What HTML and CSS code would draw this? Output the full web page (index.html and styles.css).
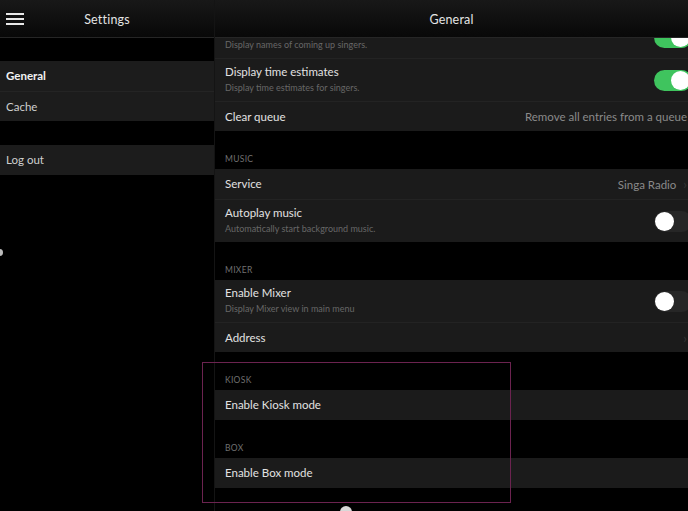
FILE: index.html
```html
<!DOCTYPE html>
<html lang="en">
<head>
    <meta charset="UTF-8">
    <meta name="viewport" content="width=device-width, initial-scale=1.0">
    <title>Settings - General</title>
    <link rel="stylesheet" href="styles.css">
</head>
<body>

    <div class="app">
        <div class="sidebar">
            <div class="topbar">
                <div class="menu-icon"><span></span><span></span><span></span></div>
                <h1>Settings</h1>
            </div>
            <div class="side-group">
                <div class="side-row active">General</div>
                <div class="side-row">Cache</div>
            </div>
            <div class="side-group">
                <div class="side-row">Log out</div>
            </div>
        </div>

        <div class="main">
            <div class="topbar">
                <h1>General</h1>
            </div>
            <div class="content">
                <div class="group first">
                    <div class="row tall">
                        <div class="text">
                            <div class="title">Show coming up singers</div>
                            <div class="sub">Display names of coming up singers.</div>
                        </div>
                        <div class="toggle on"></div>
                    </div>
                    <div class="row tall">
                        <div class="text">
                            <div class="title">Display time estimates</div>
                            <div class="sub">Display time estimates for singers.</div>
                        </div>
                        <div class="toggle on"></div>
                    </div>
                    <div class="row">
                        <div class="title">Clear queue</div>
                        <div class="value">Remove all entries from a queue</div>
                    </div>
                </div>

                <div class="section-label">MUSIC</div>
                <div class="group">
                    <div class="row">
                        <div class="title">Service</div>
                        <div class="value">Singa Radio <span class="chevron">&#8250;</span></div>
                    </div>
                    <div class="row tall">
                        <div class="text">
                            <div class="title">Autoplay music</div>
                            <div class="sub">Automatically start background music.</div>
                        </div>
                        <div class="toggle"></div>
                    </div>
                </div>

                <div class="section-label">MIXER</div>
                <div class="group">
                    <div class="row tall">
                        <div class="text">
                            <div class="title">Enable Mixer</div>
                            <div class="sub">Display Mixer view in main menu</div>
                        </div>
                        <div class="toggle"></div>
                    </div>
                    <div class="row">
                        <div class="title">Address</div>
                        <div class="value"><span class="chevron">&#8250;</span></div>
                    </div>
                </div>

                <div class="section-label">KIOSK</div>
                <div class="group">
                    <div class="row">
                        <div class="title">Enable Kiosk mode</div>
                    </div>
                </div>

                <div class="section-label">BOX</div>
                <div class="group">
                    <div class="row">
                        <div class="title">Enable Box mode</div>
                    </div>
                </div>
            </div>
        </div>
    </div>

    <!-- highlight drawn over the screenshot -->
    <div class="highlight"></div>
    <div class="scroll-dot"></div>
    <div class="edge-dot"></div>

</body>
</html>
```

FILE: styles.css
```css
html, body {
    margin: 0;
    padding: 0;
    height: 100%;
    overflow: hidden;
}
body {
    font-family: Lato, "Open Sans", sans-serif;
    background-color: #000;
    color: #e8e8e8;
    position: relative;
}
.app {
    display: flex;
    height: 511px;
}
.sidebar {
    width: 214px;
    flex-shrink: 0;
    border-right: 1px solid #141414;
}
.main {
    flex: 1;
    display: flex;
    flex-direction: column;
    overflow: hidden;
}
.topbar {
    height: 38px;
    padding-top: 2px;
    box-sizing: border-box;
    border-bottom: 1px solid #262626;
    background: linear-gradient(#181818, #080808);
    display: flex;
    align-items: center;
    justify-content: center;
    position: relative;
    z-index: 2;
    flex-shrink: 0;
}
.topbar h1 {
    margin: 0;
    font-size: 12.5px;
    font-weight: 400;
    color: #e4e4e4;
    letter-spacing: 0.2px;
}
.menu-icon {
    position: absolute;
    left: 6px;
    top: 13px;
    width: 18px;
    display: flex;
    flex-direction: column;
    gap: 3px;
}
.menu-icon span {
    display: block;
    height: 2px;
    background-color: #e8e8e8;
}
.side-group {
    margin-top: 23px;
}
.side-group + .side-group {
    margin-top: 24px;
}
.side-row {
    height: 30px;
    line-height: 29px;
    padding-left: 6px;
    background-color: #1c1c1c;
    font-size: 11.5px;
    color: #cfcfcf;
}
.side-row + .side-row {
    border-top: 1px solid #242424;
    height: 29px;
}
.side-row.active {
    font-weight: 700;
    color: #f2f2f2;
}

.content {
    flex: 1;
}
.group.first {
    margin-top: -22px;
}
.row {
    height: 30px;
    padding-left: 10px;
    background-color: #1b1b1b;
    display: flex;
    align-items: center;
    justify-content: space-between;
}
.row + .row {
    border-top: 1px solid #232323;
    height: 29px;
}
.row.tall {
    height: 42px;
}
.row + .row.tall {
    height: 42px;
}
.row.tall .text {
    align-self: flex-start;
    padding-top: 6px;
}
.title {
    font-size: 11.5px;
    color: #e2e2e2;
    line-height: 14px;
}
.sub {
    font-size: 9px;
    color: #676767;
    line-height: 10px;
    margin-top: 4px;
}
.value {
    font-size: 11.5px;
    color: #8a8a8a;
    margin-right: 1px;
}
.chevron {
    color: #333;
    font-size: 13px;
    margin-left: 4px;
}
.section-label {
    height: 10px;
    padding: 23px 0 5px 10px;
    font-size: 8.5px;
    line-height: 10px;
    color: #707070;
    letter-spacing: 0.3px;
}
.toggle {
    width: 38px;
    height: 21px;
    border-radius: 11px;
    background-color: #262626;
    margin-right: -4px;
    position: relative;
    flex-shrink: 0;
}
.toggle::after {
    content: "";
    position: absolute;
    left: 1px;
    top: 1px;
    width: 19px;
    height: 19px;
    border-radius: 50%;
    background-color: #fff;
}
.toggle.on {
    background-color: #3fc45e;
}
.toggle.on::after {
    left: 17px;
}

.highlight {
    position: absolute;
    left: 202px;
    top: 362px;
    width: 307px;
    height: 139px;
    border: 1.5px solid #6c2350;
}
.scroll-dot {
    position: absolute;
    left: 340px;
    top: 506px;
    width: 12px;
    height: 12px;
    border-radius: 50%;
    background-color: #d8d8d8;
}
.edge-dot {
    position: absolute;
    left: -4px;
    top: 249px;
    width: 7px;
    height: 7px;
    border-radius: 50%;
    background-color: #bbb;
}
```
